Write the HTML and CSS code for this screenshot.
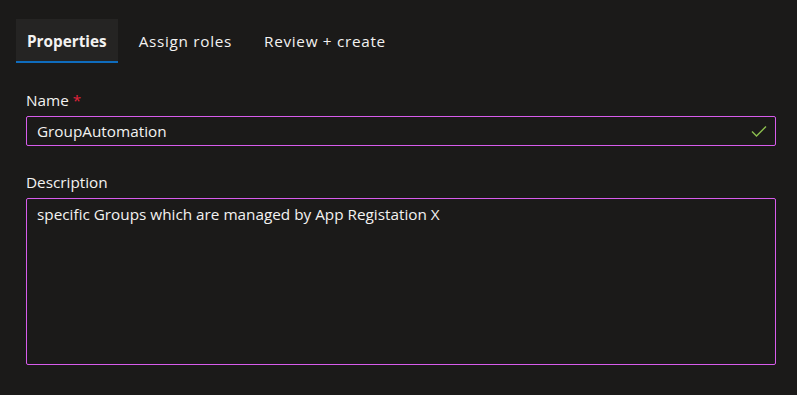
FILE: index.html
```html
<!DOCTYPE html>
<html>
	<head>
		<link rel="stylesheet" href="styles.css">
	</head>
	<body>
		<div class="tabs">
			<span class="tab active">Properties</span>
			<span class="tab">Assign roles</span>
			<span class="tab">Review + create</span>
		</div>
		<div class="form">
			<label class="lbl">Name <span class="req">*</span></label>
			<div class="field">
				<span class="value">GroupAutomation</span>
				<svg class="check" width="16" height="12" viewBox="0 0 16 12">
					<path d="M1 6.5 L5.5 11 L15 1.5" fill="none" stroke="#8bbd4e" stroke-width="1.4"/>
				</svg>
			</div>
			<label class="lbl desc">Description</label>
			<div class="area">specific Groups which are managed by App Registation X</div>
		</div>
	</body>
</html>
```

FILE: styles.css
```css
body{
	margin:0;
	background:#1b1a19;
	color:#f3f2f1;
	font-family:"Open Sans","Noto Sans",sans-serif;
	font-size:15.3px;
}
.tabs{
	display:flex;
	gap:10px;
	padding:19px 0 0 16px;
}
.tab{
	height:44px;
	line-height:44px;
	padding:0 11px;
	box-sizing:border-box;
	letter-spacing:0.7px;
}
.tab.active{
	font-weight:700;
	letter-spacing:0;
	background:#252423;
	box-shadow:inset 0 -2px 0 #0f6cbd;
}
.form{
	padding:27px 21px 0 26px;
}
.lbl{
	display:block;
	line-height:20px;
	margin-bottom:6px;
}
.lbl.desc{
	margin-top:26px;
}
.req{
	color:#e3223c;
}
.field{
	display:flex;
	align-items:center;
	justify-content:space-between;
	height:30px;
	box-sizing:border-box;
	border:1px solid #d75cec;
	border-radius:2px;
	padding:0 8px 0 10px;
}
.area{
	height:167px;
	box-sizing:border-box;
	border:1px solid #d75cec;
	border-radius:2px;
	padding:5px 10px;
}
```
